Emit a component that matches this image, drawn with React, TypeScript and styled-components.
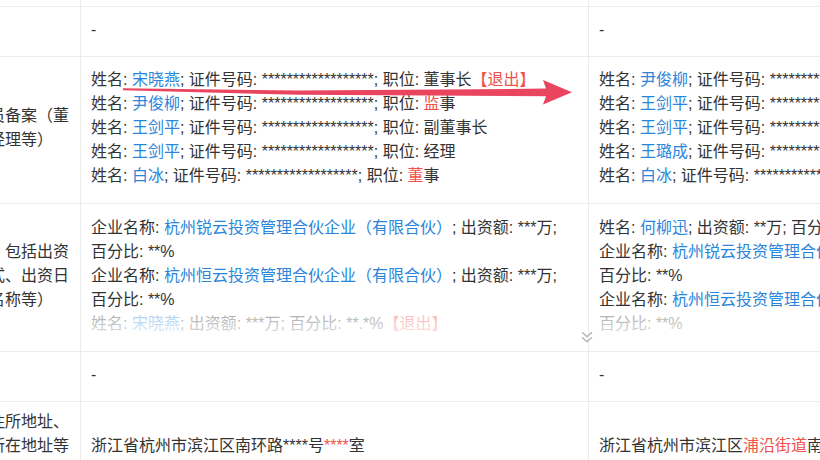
import styled, { createGlobalStyle } from 'styled-components'
import type { ReactNode } from 'react'

const GlobalStyle = createGlobalStyle`
  html, body {
    margin: 0;
    padding: 0;
    background: #fff;
  }
  body {
    font-family: "Liberation Sans", "Noto Sans CJK SC", sans-serif;
    font-size: 16px;
    color: #333;
  }
`

const Page = styled.div`
  position: relative;
  width: 820px;
  height: 460px;
  overflow: hidden;
  background: #fff;
`

// the sheet is scrolled sideways: the label column starts off-screen
const Sheet = styled.table`
  margin: -44px 0 0 -72px;
  width: 1168px;
  border-collapse: collapse;
  table-layout: fixed;
`

const Col = styled.col<{ $w: number }>`
  width: ${(p) => p.$w}px;
`

const Row = styled.tr<{ $h?: number }>`
  height: ${(p) => (p.$h ? `${p.$h}px` : 'auto')};
`

const Label = styled.td`
  padding: 8px 8px 12px 12px;
  border: 1px solid #ececec;
  vertical-align: middle;
  line-height: 24px;
  color: #333;
`

const Cell = styled.td`
  position: relative;
  padding: 8px 10px 12px;
  border: 1px solid #ececec;
  vertical-align: middle;
  line-height: 24px;
  color: #333;
`

const Line = styled.div`
  white-space: normal;
`

const Name = styled.span`
  color: #2a86db;
`

const Red = styled.span`
  color: #f0524a;
`

const Keep = styled.span`
  white-space: nowrap;
`

const Clamp = styled.div`
  position: relative;
  max-height: 120px;
  overflow: hidden;

  &::after {
    content: '';
    position: absolute;
    left: 0;
    right: 0;
    bottom: 0;
    height: 26px;
    background: linear-gradient(rgba(255, 255, 255, 0.55), rgba(255, 255, 255, 0.85));
  }
`

const Toggle = styled.span`
  position: absolute;
  right: -5px;
  bottom: 8px;
  display: flex;
  cursor: pointer;
`

const Overlay = styled.svg`
  position: absolute;
  left: 0;
  top: 0;
  pointer-events: none;
`

const STARS = '*'.repeat(18)

const Person = ({ name, children }: { name: string; children?: ReactNode }) => (
  <Line>
    姓名: <Name>{name}</Name>; 证件号码: {STARS}; 职位: {children}
  </Line>
)

const Firm = ({ name }: { name: string }) => (
  <Line>
    企业名称: <Name>{name}</Name>; 出资额: ***万; <Keep>百分比: **%</Keep>
  </Line>
)

const Chevrons = () => (
  <svg width="12" height="12" viewBox="0 0 12 12" fill="none" stroke="#a8a8a8" strokeWidth="1.2">
    <path d="M1 1.2 L6 5.6 L11 1.2 M1 6.4 L6 10.8 L11 6.4" />
  </svg>
)

const Arrow = () => (
  <Overlay width="820" height="460" viewBox="0 0 820 460">
    <polygon
      fill="#e9455f"
      points="123,88.3 300,90.6 546,88.6 543,80 572,92.3 543,104.5 546,96.2 300,94.8 123,90.3"
    />
  </Overlay>
)

export default function App() {
  return (
    <>
      <GlobalStyle />
      <Page>
        <Sheet>
          <colgroup>
            <Col $w={152} />
            <Col $w={508} />
            <Col $w={508} />
          </colgroup>
          <tbody>
            <Row $h={50}>
              <Label>网站</Label>
              <Cell>-</Cell>
              <Cell>-</Cell>
            </Row>
            <Row $h={50}>
              <Label>邮箱</Label>
              <Cell>-</Cell>
              <Cell>-</Cell>
            </Row>
            <Row $h={147}>
              <Label>主要人员备案（董事长、经理等）</Label>
              <Cell>
                <Person name="宋晓燕">
                  董事长<Red>【退出】</Red>
                </Person>
                <Person name="尹俊柳">
                  <Red>监</Red>事
                </Person>
                <Person name="王剑平">副董事长</Person>
                <Person name="王剑平">经理</Person>
                <Person name="白冰">
                  <Red>董</Red>事
                </Person>
              </Cell>
              <Cell>
                <Person name="尹俊柳">董事长</Person>
                <Person name="王剑平">副董事长</Person>
                <Person name="王剑平">经理</Person>
                <Person name="王璐成">监事</Person>
                <Person name="白冰">董事</Person>
              </Cell>
            </Row>
            <Row $h={148}>
              <Label>投资人，包括出资额、方式、出资日期及其名称等）</Label>
              <Cell>
                <Clamp>
                  <Firm name="杭州锐云投资管理合伙企业（有限合伙）" />
                  <Firm name="杭州恒云投资管理合伙企业（有限合伙）" />
                  <Line>
                    姓名: <Name>宋晓燕</Name>; 出资额: ***万; 百分比: **.*%<Red>【退出】</Red>
                  </Line>
                </Clamp>
                <Toggle>
                  <Chevrons />
                </Toggle>
              </Cell>
              <Cell>
                <Clamp>
                  <Line>
                    姓名: <Name>何柳迅</Name>; 出资额: **万; 百分比: **%
                  </Line>
                  <Firm name="杭州锐云投资管理合伙企业（有限合伙）" />
                  <Firm name="杭州恒云投资管理合伙企业（有限合伙）" />
                </Clamp>
              </Cell>
            </Row>
            <Row $h={50}>
              <Label>电话</Label>
              <Cell>-</Cell>
              <Cell>-</Cell>
            </Row>
            <Row>
              <Label>企业的住所地址、分公司所在地址等信息</Label>
              <Cell>
                浙江省杭州市滨江区南环路****号<Red>****</Red>室
              </Cell>
              <Cell>
                浙江省杭州市滨江区<Red>浦沿街道</Red>南环路****号****室
              </Cell>
            </Row>
          </tbody>
        </Sheet>
        <Arrow />
      </Page>
    </>
  )
}
